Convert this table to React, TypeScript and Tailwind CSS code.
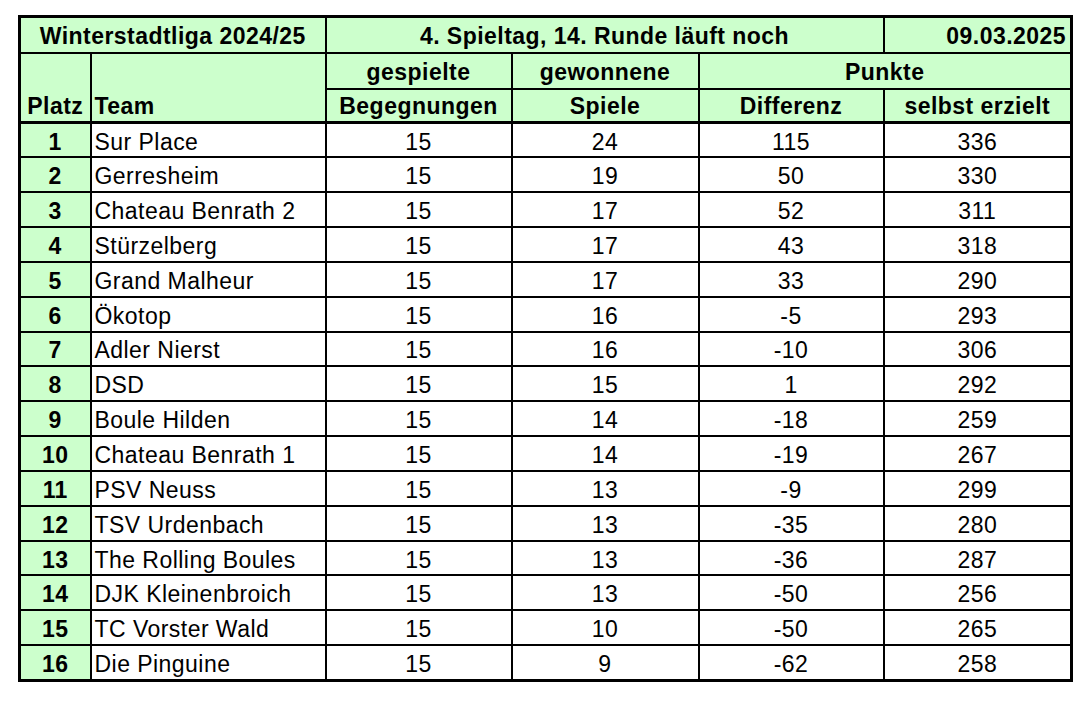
import React from "react";

type Row = {
  platz: number;
  team: string;
  begegnungen: number;
  spiele: number;
  differenz: number;
  punkte: number;
};

const rows: Row[] = [
  { platz: 1, team: "Sur Place", begegnungen: 15, spiele: 24, differenz: 115, punkte: 336 },
  { platz: 2, team: "Gerresheim", begegnungen: 15, spiele: 19, differenz: 50, punkte: 330 },
  { platz: 3, team: "Chateau Benrath 2", begegnungen: 15, spiele: 17, differenz: 52, punkte: 311 },
  { platz: 4, team: "Stürzelberg", begegnungen: 15, spiele: 17, differenz: 43, punkte: 318 },
  { platz: 5, team: "Grand Malheur", begegnungen: 15, spiele: 17, differenz: 33, punkte: 290 },
  { platz: 6, team: "Ökotop", begegnungen: 15, spiele: 16, differenz: -5, punkte: 293 },
  { platz: 7, team: "Adler Nierst", begegnungen: 15, spiele: 16, differenz: -10, punkte: 306 },
  { platz: 8, team: "DSD", begegnungen: 15, spiele: 15, differenz: 1, punkte: 292 },
  { platz: 9, team: "Boule Hilden", begegnungen: 15, spiele: 14, differenz: -18, punkte: 259 },
  { platz: 10, team: "Chateau Benrath 1", begegnungen: 15, spiele: 14, differenz: -19, punkte: 267 },
  { platz: 11, team: "PSV Neuss", begegnungen: 15, spiele: 13, differenz: -9, punkte: 299 },
  { platz: 12, team: "TSV Urdenbach", begegnungen: 15, spiele: 13, differenz: -35, punkte: 280 },
  { platz: 13, team: "The Rolling Boules", begegnungen: 15, spiele: 13, differenz: -36, punkte: 287 },
  { platz: 14, team: "DJK Kleinenbroich", begegnungen: 15, spiele: 13, differenz: -50, punkte: 256 },
  { platz: 15, team: "TC Vorster Wald", begegnungen: 15, spiele: 10, differenz: -50, punkte: 265 },
  { platz: 16, team: "Die Pinguine", begegnungen: 15, spiele: 9, differenz: -62, punkte: 258 },
];

const head = "border-2 border-black bg-[#ccffcc] font-bold p-0 pt-[3px]";
const cell = "border-2 border-black p-0 pt-[4px] text-center";

const App = () => {
  // ----------------- RENDER -----------------
  const renderRows = rows.map((row) => (
    <tr key={row.platz} className="h-[34.85px]">
      <td className={`${cell} bg-[#ccffcc] font-bold`}>{row.platz}</td>
      <td className={`${cell} text-left pl-[3px]`}>{row.team}</td>
      <td className={cell}>{row.begegnungen}</td>
      <td className={cell}>{row.spiele}</td>
      <td className={cell}>{row.differenz}</td>
      <td className={cell}>{row.punkte}</td>
    </tr>
  ));

  return (
    <div className="min-h-screen bg-white pt-[15px] pl-[18px] font-['Liberation_Sans',Arial,sans-serif] text-[23px] tracking-[0.02em] leading-none text-black">
      <table className="w-[1052px] table-fixed border-collapse border-[3px] border-black">
        <colgroup>
          <col className="w-[71px]" />
          <col className="w-[235px]" />
          <col className="w-[186px]" />
          <col className="w-[187px]" />
          <col className="w-[185px]" />
          <col className="w-[188px]" />
        </colgroup>
        <thead>
          <tr className="h-[36px]">
            <th colSpan={2} className={`${head} text-center`}>
              Winterstadtliga 2024/25
            </th>
            <th colSpan={3} className={`${head} text-center`}>
              4. Spieltag, 14. Runde läuft noch
            </th>
            <th className={`${head} text-right pr-[4px]`}>09.03.2025</th>
          </tr>
          <tr className="h-[36px]">
            <th rowSpan={2} className={`${head} align-bottom text-center pb-[3px] border-b-[3px]`}>
              Platz
            </th>
            <th rowSpan={2} className={`${head} align-bottom text-left pl-[3px] pb-[3px] border-b-[3px]`}>
              Team
            </th>
            <th className={head}>gespielte</th>
            <th className={head}>gewonnene</th>
            <th colSpan={2} className={head}>
              Punkte
            </th>
          </tr>
          <tr className="h-[34px]">
            <th className={`${head} border-b-[3px]`}>Begegnungen</th>
            <th className={`${head} border-b-[3px]`}>Spiele</th>
            <th className={`${head} border-b-[3px]`}>Differenz</th>
            <th className={`${head} border-b-[3px]`}>selbst erzielt</th>
          </tr>
        </thead>
        <tbody>{renderRows}</tbody>
      </table>
    </div>
  );
};

export default App;
